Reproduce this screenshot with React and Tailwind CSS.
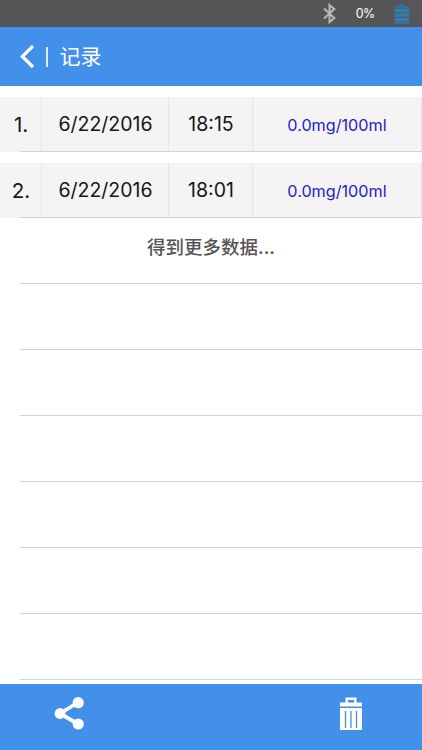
import React from "react";

const records = [
    { id: 1, date: "6/22/2016", time: "18:15", value: "0.0mg/100ml" },
    { id: 2, date: "6/22/2016", time: "18:01", value: "0.0mg/100ml" },
];

const emptyRows = [1, 2, 3, 4, 5, 6];

const BluetoothIcon = () => (
    <svg width="13" height="22" viewBox="0 0 13 22" fill="none" stroke="#b8b8b8" strokeWidth="2">
        <path d="M1 5.5 L11.3 15 L6.5 19 V2 L11.3 6 L1 15.5" />
    </svg>
);

const BatteryIcon = () => (
    <svg width="16" height="20" viewBox="0 0 16 20">
        <path d="M5 0h6v2h3a1.5 1.5 0 0 1 1.5 1.5v15a1.5 1.5 0 0 1-1.5 1.5H2a1.5 1.5 0 0 1-1.5-1.5v-15A1.5 1.5 0 0 1 2 2h3z" fill="#386f94" />
        <path d="M1 6.5h14M1 11h14M1 15.5h14" stroke="#4a85a9" strokeWidth="1" />
    </svg>
);

const ShareIcon = () => (
    <svg width="30" height="33" viewBox="0 0 30 33" fill="#fff">
        <path d="M24 5.5 L6 16.5 L24 27" fill="none" stroke="#fff" strokeWidth="3.8" />
        <circle cx="6" cy="16.5" r="5.4" />
        <circle cx="24.2" cy="5.7" r="5.6" />
        <circle cx="24.2" cy="27" r="5.6" />
    </svg>
);

const TrashIcon = () => (
    <svg width="22" height="33" viewBox="0 0 22 33" fill="#fff">
        <path d="M5.5 0.5h11v5H22v4H0v-4h5.5zM8 3v2.5h6V3z" fillRule="evenodd" />
        <path d="M0 11h22v22H0z" />
        <path d="M5.5 14v17M11 14v17M16.5 14v17" stroke="#4390ea" strokeWidth="1.3" />
    </svg>
);

const RecordRow = ({ record }) => {
    return (
        <li className="flex h-[66px] shrink-0 flex-col pt-[11px]">
            <div className="flex h-[54px] items-center bg-[#f4f4f4] text-[19.5px] text-[#161616]">
                <div className="flex h-full w-[42px] items-center justify-center border-r border-[#e6e6e6] pt-0.5 pl-px text-[20.5px]">{record.id}.</div>
                <div className="flex h-full w-[127px] items-center justify-center border-r border-[#e6e6e6] pt-0.5 pl-px">{record.date}</div>
                <div className="flex h-full w-[84px] items-center justify-center border-r border-[#e6e6e6] pt-0.5 pl-px">{record.time}</div>
                <div className="flex h-full flex-1 items-center justify-center border-r border-[#e6e6e6] pt-0.5 text-[16.2px] text-[#2620cc]">{record.value}</div>
            </div>
            <div className="flex h-px bg-[#d3d3d3]">
                <div className="w-5 bg-[#f4f4f4]" />
            </div>
        </li>
    );
};

const App = () => {
    return (
        <div className="flex h-[750px] w-[422px] flex-col overflow-hidden bg-white font-['Inter','Noto_Sans_CJK_SC',sans-serif]">
            {/* Status bar */}
            <div className="flex h-[27px] shrink-0 items-center justify-end bg-[#555657] pr-3">
                <BluetoothIcon />
                <span className="mr-[19px] ml-5 pt-0.5 text-[12.5px] tracking-[-0.4px] text-white">0%</span>
                <BatteryIcon />
            </div>

            {/* Title bar */}
            <header className="flex h-[59px] shrink-0 items-center bg-[#4390ea] pl-5 text-white">
                <svg width="15" height="24" viewBox="0 0 15 24" fill="none" stroke="#fff" strokeWidth="3.2">
                    <path d="M13 1 L2.3 11.5 L13 22" />
                </svg>
                <div className="ml-[11px] h-5 w-[1.5px] bg-[#dcebfc]" />
                <h1 className="ml-3 text-[21px] leading-6">记录</h1>
            </header>

            {/* Records */}
            <ul className="flex flex-1 flex-col overflow-hidden">
                {records.map((record) => (
                    <RecordRow key={record.id} record={record} />
                ))}
                <li className="flex h-[66px] shrink-0 flex-col">
                    <div className="flex-1 pt-[15px] text-center text-[18.5px] leading-7 font-medium text-[#555]">得到更多数据...</div>
                    <div className="ml-5 h-px bg-[#d3d3d3]" />
                </li>
                {emptyRows.map((row) => (
                    <li key={row} className="ml-5 h-[66px] shrink-0 border-b border-[#d3d3d3]" />
                ))}
            </ul>

            {/* Bottom bar */}
            <footer className="flex h-[66px] shrink-0 items-start justify-between bg-[#4390ea] pt-[13px] pr-[60px] pl-[54px]">
                <button><ShareIcon /></button>
                <button><TrashIcon /></button>
            </footer>
        </div>
    );
};

export default App;
